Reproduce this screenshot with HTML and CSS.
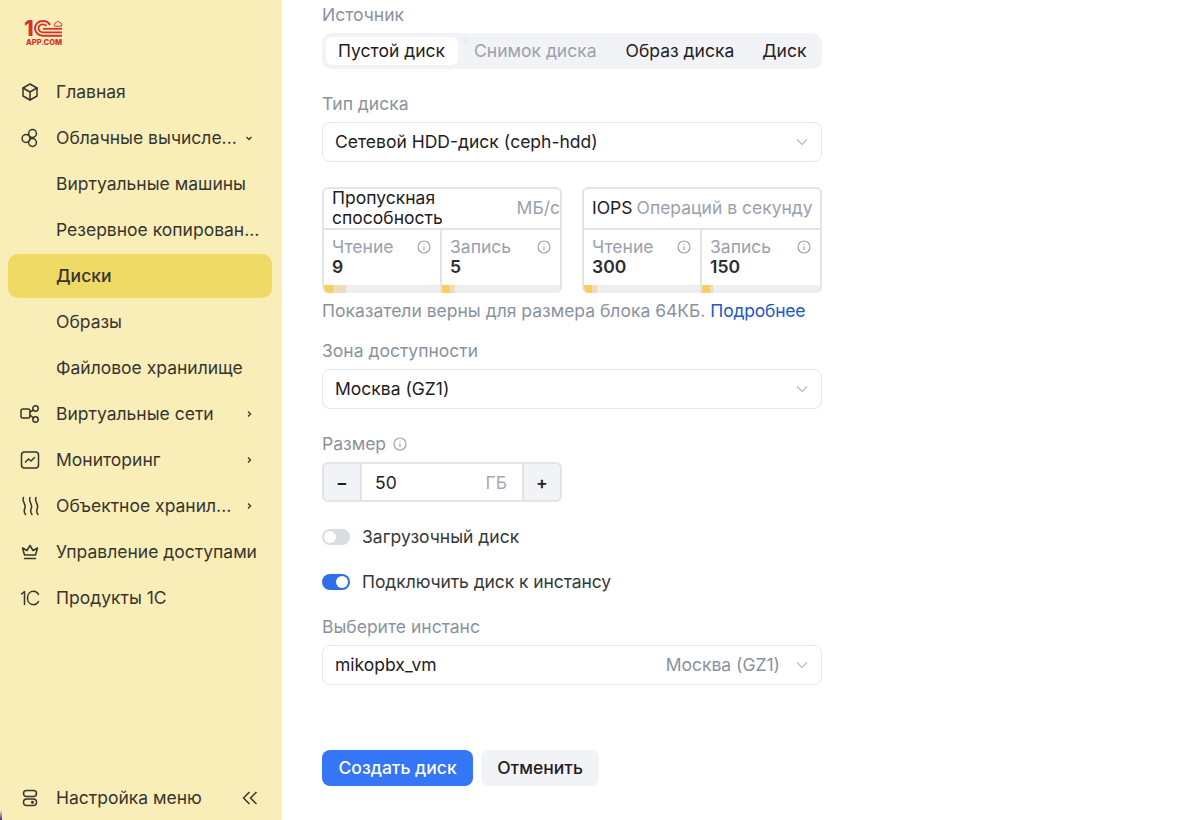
FILE: index.html
```html
<!DOCTYPE html>
<html lang="ru">
<head>
    <meta charset="UTF-8">
    <meta name="viewport" content="width=device-width, initial-scale=1.0">
    <title>Создать диск</title>
    <link rel="stylesheet" href="styles.css">
</head>
<body>
<div class="app">
    <aside class="sidebar">
        <div class="logo">
            <div class="logo-top">
                <span class="logo-one">1</span>
                <svg class="logo-mark" width="29" height="17" viewBox="0 0 29 17" fill="none" stroke="#d3322c">
                    <path d="M16 5C14.500 2 12 1 9 1C4 1 1 4.300 1 8.300C1 12.300 4 15.700 9 15.700H28" stroke-width="2"/>
                    <path d="M12.500 6C11.500 4.900 10.300 4.400 9 4.400C6.500 4.400 4.500 6 4.500 8.300C4.500 10.600 6.500 12.300 9 12.300H28" stroke-width="1.800"/>
                    <path d="M9 8.800H28" stroke-width="1.800"/>
                    <path d="M20.500 6.200H27.500C28.600 4.500 27.300 2.800 26 3C25.500 .8 22.500 .8 22 2.900C20.500 3 19.800 5 20.500 6.200Z" stroke-width="1"/>
                </svg>
            </div>
            <span class="logo-text">APP.COM</span>
        </div>
        <nav class="menu">
            <a class="menu-item">
                <svg class="menu-icon" viewBox="0 0 20 20"><path d="M10 2l7 4v8l-7 4-7-4V6z"/><path d="M3 6l7 4 7-4M10 10v8"/></svg>
                <span class="menu-label">Главная</span>
            </a>
            <a class="menu-item">
                <svg class="menu-icon" viewBox="0 0 20 20"><circle cx="12.500" cy="5.500" r="3.900"/><circle cx="6" cy="10.500" r="3.900"/><circle cx="12.500" cy="14.500" r="3.900"/></svg>
                <span class="menu-label">Облачные вычисле...</span>
                <svg class="menu-arrow" viewBox="0 0 8 8"><path d="M1.500 3l2.500 2.500L6.500 3"/></svg>
            </a>
            <a class="menu-item sub">Виртуальные машины</a>
            <a class="menu-item sub">Резервное копирован...</a>
            <a class="menu-item sub active">Диски</a>
            <a class="menu-item sub">Образы</a>
            <a class="menu-item sub">Файловое хранилище</a>
            <a class="menu-item">
                <svg class="menu-icon" viewBox="0 0 20 20"><rect x="1" y="5" width="9" height="9" rx="2"/><circle cx="15.500" cy="4.500" r="2.700"/><circle cx="15.500" cy="15.500" r="2.700"/><path d="M10 8l3.500-2M10 11l3.500 3"/></svg>
                <span class="menu-label">Виртуальные сети</span>
                <svg class="menu-arrow" viewBox="0 0 8 8"><path d="M3 1.500L5.500 4 3 6.500"/></svg>
            </a>
            <a class="menu-item">
                <svg class="menu-icon" viewBox="0 0 20 20"><rect x="1.500" y="2" width="17" height="16" rx="3"/><path d="M5.500 12l3-3 2.500 2 3.500-3.500"/></svg>
                <span class="menu-label">Мониторинг</span>
                <svg class="menu-arrow" viewBox="0 0 8 8"><path d="M3 1.500L5.500 4 3 6.500"/></svg>
            </a>
            <a class="menu-item">
                <svg class="menu-icon" viewBox="0 0 20 20"><path d="M3.500 1.500C1.500 5 6 8 5 11.500 4.500 14 3 15.500 5.500 18.500M10 1.500C8 5 12.500 8 11.500 11.500 11 14 9.500 15.500 12 18.500M16 1.500C14 5 18.500 8 17.500 11.500 17 14 15.500 15.500 18 18.500"/></svg>
                <span class="menu-label">Объектное хранил...</span>
                <svg class="menu-arrow" viewBox="0 0 8 8"><path d="M3 1.500L5.500 4 3 6.500"/></svg>
            </a>
            <a class="menu-item">
                <svg class="menu-icon" viewBox="0 0 20 20"><path d="M4.500 13L2.500 6l4.500 2.500L10 3.500l3 5L17.500 6l-2 7zM4.500 16.500h11"/></svg>
                <span class="menu-label">Управление доступами</span>
            </a>
            <a class="menu-item">
                <svg class="menu-icon" viewBox="0 0 20 20"><path d="M1.500 6L4.500 3.500V16.500"/><path d="M18.500 6.500C17.500 4.500 15.500 3.300 13.500 3.300C10 3.300 7.500 6 7.500 10C7.500 14 10 16.700 13.500 16.700C15.500 16.700 17.500 15.500 18.500 13.500"/></svg>
                <span class="menu-label">Продукты 1С</span>
            </a>
        </nav>
        <a class="menu-item menu-bottom">
            <svg class="menu-icon" viewBox="0 0 20 20"><rect x="3.500" y="2.500" width="13" height="6" rx="3"/><rect x="3.500" y="11" width="13" height="6.500" rx="3.250"/><circle cx="12.500" cy="14.250" r=".8"/></svg>
            <span class="menu-label">Настройка меню</span>
            <svg class="collapse" width="16" height="14" viewBox="0 0 16 14"><path d="M7.500 1L1.500 7l6 6M14.500 1l-6 6 6 6"/></svg>
        </a>
    </aside>

    <main class="content">
        <form class="form">
            <div class="field-label">Источник</div>
            <div class="tabs">
                <span class="tab selected">Пустой диск</span>
                <span class="tab disabled">Снимок диска</span>
                <span class="tab">Образ диска</span>
                <span class="tab">Диск</span>
            </div>

            <div class="field-label gap-top">Тип диска</div>
            <div class="select">
                <span class="select-value">Сетевой HDD-диск (ceph-hdd)</span>
                <svg class="select-arrow" viewBox="0 0 14 14"><path d="M2 4.500l5 5 5-5"/></svg>
            </div>

            <div class="metrics">
                <div class="metric">
                    <div class="metric-head">
                        <span class="metric-name">Пропускная способность</span>
                        <span class="metric-unit">МБ/с</span>
                    </div>
                    <div class="metric-cells">
                        <div class="cell">
                            <div class="cell-top">Чтение
                                <svg class="info" viewBox="0 0 14 14"><circle cx="7" cy="7" r="6"/><path d="M7 6.500v3.500M7 3.800v.9"/></svg>
                            </div>
                            <div class="cell-value">9</div>
                            <div class="bar"><i class="bar-fill" style="width:9px"></i><i class="bar-soft" style="width:13px"></i></div>
                        </div>
                        <div class="cell">
                            <div class="cell-top">Запись
                                <svg class="info" viewBox="0 0 14 14"><circle cx="7" cy="7" r="6"/><path d="M7 6.500v3.500M7 3.800v.9"/></svg>
                            </div>
                            <div class="cell-value">5</div>
                            <div class="bar"><i class="bar-fill" style="width:8px"></i><i class="bar-soft" style="width:5px"></i></div>
                        </div>
                    </div>
                </div>
                <div class="metric">
                    <div class="metric-head">
                        <span class="metric-name">IOPS</span>
                        <span class="metric-unit">Операций в секунду</span>
                    </div>
                    <div class="metric-cells">
                        <div class="cell">
                            <div class="cell-top">Чтение
                                <svg class="info" viewBox="0 0 14 14"><circle cx="7" cy="7" r="6"/><path d="M7 6.500v3.500M7 3.800v.9"/></svg>
                            </div>
                            <div class="cell-value">300</div>
                            <div class="bar"><i class="bar-fill" style="width:8px"></i><i class="bar-soft" style="width:5px"></i></div>
                        </div>
                        <div class="cell">
                            <div class="cell-top">Запись
                                <svg class="info" viewBox="0 0 14 14"><circle cx="7" cy="7" r="6"/><path d="M7 6.500v3.500M7 3.800v.9"/></svg>
                            </div>
                            <div class="cell-value">150</div>
                            <div class="bar"><i class="bar-fill" style="width:8px"></i><i class="bar-soft" style="width:3px"></i></div>
                        </div>
                    </div>
                </div>
            </div>
            <div class="note">Показатели верны для размера блока 64КБ. <a class="link">Подробнее</a></div>

            <div class="field-label note-gap">Зона доступности</div>
            <div class="select">
                <span class="select-value">Москва (GZ1)</span>
                <svg class="select-arrow" viewBox="0 0 14 14"><path d="M2 4.500l5 5 5-5"/></svg>
            </div>

            <div class="field-label gap-top">Размер
                <svg class="info" viewBox="0 0 14 14"><circle cx="7" cy="7" r="6"/><path d="M7 6.500v3.500M7 3.800v.9"/></svg>
            </div>
            <div class="stepper">
                <span class="step">−</span>
                <div class="step-input"><span>50</span><span class="step-unit">ГБ</span></div>
                <span class="step">+</span>
            </div>

            <label class="switch-row first">
                <span class="switch"></span>
                Загрузочный диск
            </label>
            <label class="switch-row tight">
                <span class="switch on"></span>
                Подключить диск к инстансу
            </label>

            <div class="field-label instance-label">Выберите инстанс</div>
            <div class="select">
                <span class="select-value">mikopbx_vm</span>
                <span class="select-extra">Москва (GZ1)</span>
                <svg class="select-arrow" viewBox="0 0 14 14"><path d="M2 4.500l5 5 5-5"/></svg>
            </div>

            <div class="actions">
                <button type="button" class="btn primary">Создать диск</button>
                <button type="button" class="btn">Отменить</button>
            </div>
        </form>
    </main>
</div>
</body>
</html>
```

FILE: styles.css
```css
* { box-sizing: border-box; }

html, body {
  margin: 0;
  height: 100%;
  overflow: hidden;
}

body {
  font-family: Inter, "Noto Sans", sans-serif;
  font-size: 17.5px;
  line-height: 22px;
  color: #1f2024;
  background: #fff;
}

.app {
  display: flex;
  height: 820px;
}

/* sidebar */
.sidebar {
  position: relative;
  flex: 0 0 282px;
  display: flex;
  flex-direction: column;
  padding: 0 10px 0 8px;
  background: #f9edb8;
  color: #36352f;
}

/* dark sliver of the window corner */
.sidebar::after {
  content: "";
  position: absolute;
  left: 0;
  bottom: 0;
  width: 2px;
  height: 10px;
  background: linear-gradient(#f9edb8, #4b2a80);
}

.logo {
  display: flex;
  flex-direction: column;
  align-items: flex-start;
  height: 70px;
  padding: 20px 0 0 16px;
}

.logo-top {
  display: flex;
  align-items: center;
  height: 17px;
}

.logo-one {
  width: 10px;
  font-size: 22px;
  line-height: 17px;
  font-weight: 800;
  color: #d3322c;
}

.logo-mark { display: block; }

.logo-text {
  width: 38px;
  margin-top: 1px;
  padding-left: 2px;
  font-size: 7.500px;
  line-height: 9px;
  font-weight: 800;
  white-space: nowrap;
  color: #d3322c;
}

.menu {
  display: flex;
  flex-direction: column;
  gap: 2px;
}

.menu-item {
  display: flex;
  align-items: center;
  height: 44px;
  padding: 0 12px;
  border-radius: 10px;
  white-space: nowrap;
}

.menu-item.sub { padding-left: 48px; }

.menu-item.active {
  background: #f0da66;
  font-weight: 500;
}

.menu-bottom { margin-top: auto; }

.menu-icon {
  flex: none;
  width: 20px;
  height: 20px;
  margin-right: 16px;
  fill: none;
  stroke: #36352f;
  stroke-width: 1.500;
  stroke-linecap: round;
  stroke-linejoin: round;
}

.menu-label {
  flex: 1;
  min-width: 0;
}

.menu-arrow {
  flex: none;
  width: 8px;
  height: 8px;
  margin-right: 7px;
  fill: none;
  stroke: #36352f;
  stroke-width: 1.300;
}

.collapse {
  flex: none;
  margin-right: 2px;
  fill: none;
  stroke: #36352f;
  stroke-width: 1.500;
}

/* form */
.content {
  flex: 1;
  padding: 4px 0 0 40px;
}

.form {
  display: flex;
  flex-direction: column;
  width: 500px;
}

.field-label {
  display: flex;
  align-items: center;
  gap: 7px;
  height: 22px;
  margin-bottom: 7px;
  color: #8a92a0;
}

.gap-top { margin-top: 24px; }
.note-gap { margin-top: 18px; }
.instance-label { margin-top: 23px; }

.tabs {
  display: flex;
  align-items: center;
  height: 36px;
  padding: 0 4px;
  background: #f2f3f7;
  border-radius: 10px;
  white-space: nowrap;
}

.tab {
  position: relative;
  height: 28px;
  padding: 0 12px;
  margin-right: 4px;
  border-radius: 6px;
  line-height: 28px;
}

.tab:last-child { margin-right: 0; }
.tab.selected { padding-right: 13px; background: #fff; }
.tab.disabled { margin-right: 5px; color: #9aa1ad; }

/* faint spot left of the disabled tab */
.tab.disabled::before {
  content: "";
  position: absolute;
  left: 0;
  top: 0;
  width: 8px;
  height: 8px;
  border-radius: 50%;
  background: #eceef2;
}

.select {
  display: flex;
  align-items: center;
  height: 40px;
  padding: 0 12px;
  background: #fff;
  border: 1px solid #e6e7ec;
  border-radius: 8px;
}

.select-value { flex: 1; }

.select-extra {
  margin-right: 14px;
  color: #8a92a0;
}

.select-arrow {
  flex: none;
  width: 14px;
  height: 14px;
  margin-left: 1px;
  fill: none;
  stroke: #b4b9c2;
  stroke-width: 1.200;
}

/* bandwidth and iops */
.metrics {
  display: grid;
  grid-template-columns: 240px 240px;
  gap: 20px;
  margin-top: 25px;
}

.metric {
  height: 106px;
  border: 2px solid #e3e4ea;
  border-bottom: 0;
  border-radius: 6px;
  overflow: hidden;
}

.metric-head {
  display: flex;
  align-items: center;
  justify-content: space-between;
  height: 41px;
  padding: 0 0 2px 8px;
  border-bottom: 2px solid #e3e4ea;
  line-height: 20px;
}

.metric-name { width: 135px; }

.metric-unit {
  color: #9aa1ad;
  white-space: nowrap;
}

.metric:last-child .metric-head { justify-content: flex-start; gap: 4px; }
.metric:last-child .metric-name { width: auto; }

.metric-cells {
  display: grid;
  grid-template-columns: 116px 118px;
  gap: 2px;
  background: #e3e4ea;
}

.cell {
  position: relative;
  height: 63px;
  padding: 7px 9px 0 8px;
  background: #fff;
}

.cell-top {
  display: flex;
  align-items: center;
  justify-content: space-between;
  height: 20px;
  line-height: 20px;
  color: #9aa1ad;
}

.cell-value {
  height: 20px;
  line-height: 20px;
  font-weight: 600;
  color: #2c2d31;
}

.bar {
  position: absolute;
  left: 0;
  right: 0;
  bottom: 0;
  display: flex;
  height: 8px;
  background: #efefef;
}

.bar-fill { background: #f6cf62; }
.bar-soft { background: #f0dcb8; }

.info {
  flex: none;
  width: 14px;
  height: 14px;
  fill: none;
  stroke: #9aa1ad;
  stroke-width: 1.200;
}

.note {
  margin-top: 7px;
  color: #8a92a0;
  white-space: nowrap;
}

.link {
  letter-spacing: -0.2px;
  color: #2258c8;
}

/* size */
.stepper {
  display: flex;
  width: 240px;
  height: 40px;
  background: #f2f3f7;
  border: 2px solid #e3e4ea;
  border-radius: 6px;
}

.step {
  flex: 0 0 36px;
  text-align: center;
  line-height: 38px;
  font-weight: 600;
}

.step-input {
  flex: 1;
  display: flex;
  justify-content: space-between;
  align-items: center;
  padding: 1px 15px 0 13px;
  background: #fff;
  border-left: 2px solid #e3e4ea;
  border-right: 2px solid #e3e4ea;
}

.step-unit { color: #a4aab5; }

/* switches */
.switch-row {
  display: flex;
  align-items: center;
  gap: 12px;
  height: 22px;
  margin-top: 23px;
  color: #36373b;
}

.switch-row.first { margin-top: 24px; }
.switch-row.tight { letter-spacing: -0.08px; }

.switch {
  position: relative;
  width: 28px;
  height: 16px;
  border-radius: 8px;
  background: #d9dce1;
}

.switch::after {
  content: "";
  position: absolute;
  top: 2px;
  left: 2px;
  width: 12px;
  height: 12px;
  border-radius: 50%;
  background: #fff;
}

.switch.on { background: #2f6fed; }
.switch.on::after { left: 14px; }

/* buttons */
.actions {
  display: flex;
  gap: 8px;
  margin-top: 65px;
}

.btn {
  height: 36px;
  padding: 0 16px;
  border: 0;
  border-radius: 8px;
  background: #f2f3f7;
  color: #1f2024;
  font: inherit;
  font-weight: 500;
}

.btn.primary {
  padding: 0 16.500px;
  background: #3476f6;
  color: #fff;
}
```
